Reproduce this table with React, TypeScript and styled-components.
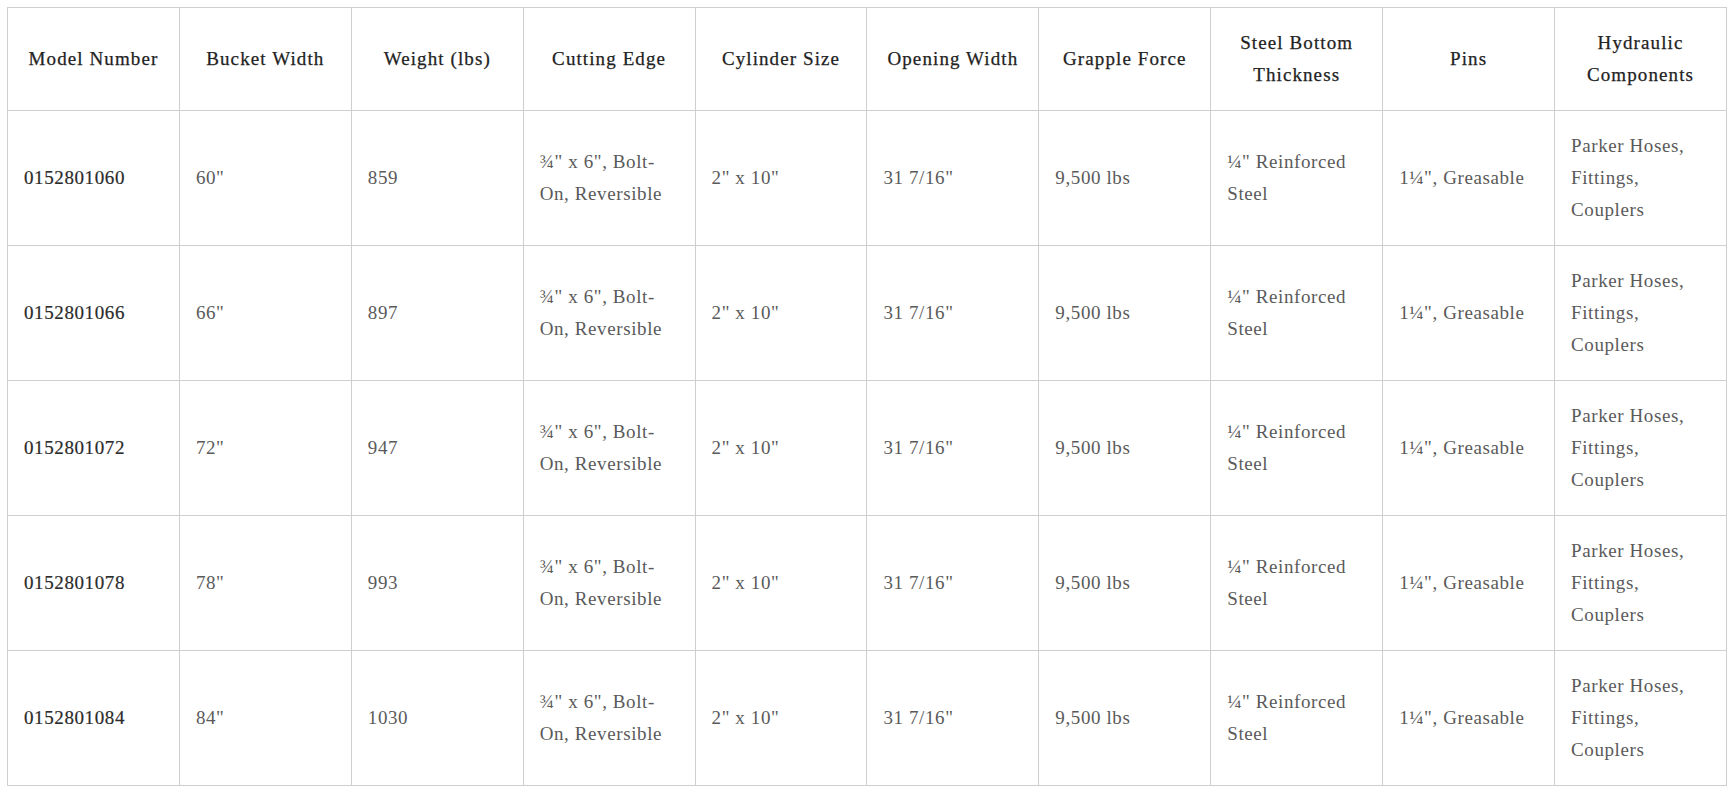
import React from 'react'
import styled, { createGlobalStyle } from 'styled-components'

type Row = {
  model: string
  width: string
  weight: string
}

const HEADERS = [
  'Model Number',
  'Bucket Width',
  'Weight (lbs)',
  'Cutting Edge',
  'Cylinder Size',
  'Opening Width',
  'Grapple Force',
  'Steel Bottom Thickness',
  'Pins',
  'Hydraulic Components',
]

const ROWS: Row[] = [
  { model: '0152801060', width: '60"', weight: '859' },
  { model: '0152801066', width: '66"', weight: '897' },
  { model: '0152801072', width: '72"', weight: '947' },
  { model: '0152801078', width: '78"', weight: '993' },
  { model: '0152801084', width: '84"', weight: '1030' },
]

export default function App() {
  return (
    <>
      <GlobalStyle />
      <Page>
        <SpecTable>
          <thead>
            <tr>
              {HEADERS.map((h) => (
                <HeadCell key={h}>{h}</HeadCell>
              ))}
            </tr>
          </thead>
          <tbody>
            {ROWS.map((row) => (
              <tr key={row.model}>
                <Cell $strong>{row.model}</Cell>
                <Cell>{row.width}</Cell>
                <Cell>{row.weight}</Cell>
                <Cell>¾" x 6", Bolt-On, Reversible</Cell>
                <Cell>2" x 10"</Cell>
                <Cell>31 7/16"</Cell>
                <Cell>9,500 lbs</Cell>
                <Cell>¼" Reinforced Steel</Cell>
                <Cell>1¼", Greasable</Cell>
                <Cell>Parker Hoses, Fittings, Couplers</Cell>
              </tr>
            ))}
          </tbody>
        </SpecTable>
      </Page>
    </>
  )
}

const GlobalStyle = createGlobalStyle`
  body {
    margin: 0;
    background: #fff;
    font-family: "Liberation Serif", "Times New Roman", serif;
  }
`

const Page = styled.div`
  padding: 7px 8px 7px 7px;
`

const SpecTable = styled.table`
  width: 100%;
  table-layout: fixed;
  border-collapse: collapse;
  border: 1px solid #cfcfcf;
  font-size: 19px;
  line-height: 32px;
`

const HeadCell = styled.th`
  border: 1px solid #cfcfcf;
  padding: 19px 14px;
  text-align: center;
  vertical-align: middle;
  font-weight: normal;
  letter-spacing: 1.1px;
  color: #222;
  -webkit-text-stroke: 0.25px #222;
`

const Cell = styled.td<{ $strong?: boolean }>`
  border: 1px solid #cfcfcf;
  padding: 19px 24px 19px 16px;
  text-align: left;
  vertical-align: middle;
  letter-spacing: 0.6px;
  color: ${({ $strong }) => ($strong ? '#2b2b2b' : '#5a5a5a')};
  -webkit-text-stroke: ${({ $strong }) => ($strong ? '0.2px #2b2b2b' : '0')};
`
